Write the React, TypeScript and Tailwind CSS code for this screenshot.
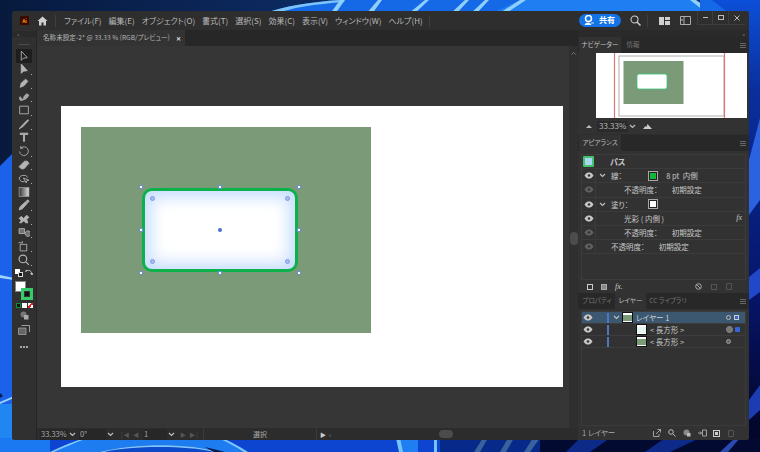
import type { ReactNode } from "react";

const MENUS = ["ファイル(F)", "編集(E)", "オブジェクト(O)", "書式(T)", "選択(S)", "効果(C)", "表示(V)", "ウィンドウ(W)", "ヘルプ(H)"];

const G = "fill-[#b4b4b4] stroke-[#b4b4b4]";

function Eye({ dim }: { dim?: boolean }) {
  return (
    <svg width="10" height="7" viewBox="0 0 10 7" className={dim ? "opacity-30" : ""}>
      <path d="M0.5 3.5C2 1 3.5 0.5 5 0.5S8 1 9.5 3.5C8 6 6.500 6.500 5 6.500S2 6 0.500 3.500Z" fill="#c9c9c9" />
      <circle cx="5" cy="3.500" r="1.300" fill="#333" />
    </svg>
  );
}

function Chevron() {
  return (
    <svg width="7" height="5" viewBox="0 0 7 5">
      <path d="M1 1l2.500 2.500L6 1" fill="none" stroke="#bdbdbd" strokeWidth="1.200" />
    </svg>
  );
}

function Menu3() {
  return (
    <div className="mr-[3px] flex flex-col justify-center gap-[1px]">
      <span className="h-px w-[6px] bg-[#666]" />
      <span className="h-px w-[6px] bg-[#666]" />
      <span className="h-px w-[6px] bg-[#666]" />
    </div>
  );
}

function Tool({ children, active, corner = true }: { children: ReactNode; active?: boolean; corner?: boolean }) {
  return (
    <div className={`relative flex h-[13.6px] w-[16px] items-center justify-center ${active ? "rounded-[1px] bg-[#1e1e1e]" : ""}`}>
      <svg width="12" height="12" viewBox="0 0 11 11" className={G} strokeWidth="0.8">
        {children}
      </svg>
      {corner && <span className="absolute bottom-[1px] right-[0px] h-[1px] w-[1px] bg-[#aaa]" />}
    </div>
  );
}

function AppRow({ eye, dim, children, fx }: { eye?: boolean; dim?: boolean; children: ReactNode; fx?: boolean }) {
  return (
    <div className="flex h-[14.2px] items-center border-b border-[#3b3b3b]">
      <div className="flex h-full w-[14px] items-center justify-center border-r border-[#3b3b3b]">{eye && <Eye dim={dim} />}</div>
      <div className="flex flex-1 items-center">{children}</div>
      {fx && <span className="mr-[3px] font-['Liberation_Serif',serif] text-[8px] italic text-[#c9c9c9]">fx</span>}
    </div>
  );
}

function Thumb({ green }: { green?: boolean }) {
  return (
    <div className="flex h-[11px] w-[11px] items-center justify-center border border-[#111] bg-white">
      <div className={`h-[6px] w-[9px] ${green ? "bg-[#7a9a78]" : "bg-[#e6f6ef]"}`} />
    </div>
  );
}

function LayerRow({ active, children, right }: { active?: boolean; children: ReactNode; right: ReactNode }) {
  return (
    <div className={`flex h-[12px] items-center border-b border-[#3d3d3d] ${active ? "bg-[#3c5870]" : ""}`}>
      <div className="flex w-[12px] justify-center"><Eye /></div>
      <div className="ml-[13px] h-[10px] w-[2px] bg-[#4f74c8]" />
      <div className="flex flex-1 items-center">{children}</div>
      <div className="flex w-[22px] items-center gap-[2px] pl-[3px]">{right}</div>
    </div>
  );
}

function Handle({ className }: { className: string }) {
  return <span className={`absolute h-[4px] w-[4px] border border-[#6f8ed0] bg-white ${className}`} />;
}

function Corner({ className }: { className: string }) {
  return <span className={`absolute h-[5px] w-[5px] rounded-full border border-[#7f9be6] bg-[#a9bdf0] ${className}`} />;
}

export default function App() {
  return (
    <div className="relative h-[452px] w-[760px] overflow-hidden bg-[#0a2a78] font-['Noto_Sans_CJK_JP',sans-serif] text-[8.500px] text-[#c8c8c8] [font-feature-settings:'palt']">
      {/* wallpaper */}
      <svg className="absolute inset-0" width="760" height="452" viewBox="0 0 760 452">
        <defs>
          <linearGradient id="top" x1="0" y1="0" x2="1" y2="0">
            <stop offset="0" stopColor="#071a3e" />
            <stop offset="0.45" stopColor="#0d2c66" />
            <stop offset="1" stopColor="#0c2f78" />
          </linearGradient>
          <linearGradient id="rgt" x1="0" y1="0" x2="0" y2="1">
            <stop offset="0" stopColor="#0c4fd8" />
            <stop offset="0.2" stopColor="#0a2f9c" />
            <stop offset="0.65" stopColor="#06156a" />
            <stop offset="1" stopColor="#020420" />
          </linearGradient>
        </defs>
        <rect width="760" height="452" fill="url(#top)" />
        {/* top band */}
        <path d="M262 14C285 6 310 2 340 0H690L712 14Z" fill="#1568e6" />
        <path d="M520 0H690L712 14H490Z" fill="#1f7ff2" />
        <path d="M262 14C285 6 310 2 340 0L345 2C315 4 290 8 275 14Z" fill="#7cc4f8" />
        <path d="M330 14L340 0H345L335 14ZM366 14L378 0H382L372 14ZM408 14L425 0H429L414 14ZM450 14L465 0H469L456 14ZM470 14L485 0H489L476 14ZM498 14L520 0H526L505 14ZM690 0H696L716 14H708Z" fill="#8fd0fa" />
        {/* right side */}
        <rect x="700" y="0" width="60" height="452" fill="url(#rgt)" />
        <path d="M700 0H712L730 14H700Z" fill="#1568e6" />
        <path d="M749 160L760 118V200L749 215Z" fill="#2a62e0" />
        <path d="M749 277L760 268V292L749 300Z" fill="#2148c8" />
        <path d="M749 400L760 385V410L749 420Z" fill="#1c3cb4" />
        {/* left side */}
        <path d="M0 166L14 152V452H0Z" fill="#1a62ea" />
        <path d="M0 275L14 278V280L0 278Z" fill="#9ed4fa" />
        <path d="M0 402L14 396V398L0 404Z" fill="#9ed4fa" />
        <path d="M0 393L3 396L0 398Z" fill="#051a50" />
        <path d="M0 404H14V452H0Z" fill="#1f86f2" />
        {/* bottom band */}
        <rect x="0" y="438" width="760" height="14" fill="#0d45d0" />
        <rect x="0" y="438" width="50" height="14" fill="#1a78f0" />
        <path d="M50 452C65 445 75 441 85 438H220C232 442 240 447 248 452Z" fill="#1d7cf0" />
        <path d="M100 452C130 444 185 442 218 452Z" fill="#0b49c8" />
        <path d="M50 452C65 445 75 441 85 438H88C77 442 68 446 54 452ZM100 452C130 444 185 442 218 452H214C185 445 130 446 104 452ZM222 438C232 442 240 447 248 452H244C236 447 228 442 218 438Z" fill="#82c6f8" />
        <path d="M205 447L225 452H214Z" fill="#041848" />
        <path d="M396 438H418V452H400Z" fill="#1f7ff2" />
        <path d="M396 438H400L403 452H399ZM434 438H437V452H434ZM483 438H488L480 452H474ZM508 438H514L506 452H500ZM533 438H540L530 452H524Z" fill="#77c3f8" />
        <path d="M440 452V438H700L760 438V452Z" fill="#04124e" opacity="0.55" />
        <path d="M540 438H760V452H540Z" fill="#020a32" />
        <path d="M566 452L580 438H610L590 452ZM645 452L665 438H700L670 452Z" fill="#0d2a88" />
        <path d="M720 452L735 438H740L728 452Z" fill="#2a4ab0" />
      </svg>

      {/* window */}
      <div className="absolute left-[12px] top-[11px] flex h-[429px] w-[737px] flex-col overflow-hidden rounded-[3px] bg-[#323232]">
        {/* menu bar */}
        <div className="flex h-[19px] shrink-0 items-center bg-[#2e2e2e]">
          <div className="ml-[8px] flex h-[9px] w-[9px] items-center justify-center rounded-[1px] bg-[#3a0a00] text-[5px] font-bold text-[#ff9a00]">Ai</div>
          <svg width="11" height="10" viewBox="0 0 11 10" className="ml-[8px]">
            <path d="M5.500 0.500L0.500 5H2V9.500H4.500V6.500H6.500V9.500H9V5H10.500Z" fill="#cfcfcf" />
          </svg>
          <div className="ml-[7px] h-[12px] w-px bg-[#3f3f3f]" />
          <div className="ml-[8px] flex gap-[7px] whitespace-nowrap text-[8px] text-[#b9b9b9]">
            {MENUS.map((m) => (
              <span key={m}>{m}</span>
            ))}
          </div>
          <div className="ml-[6px] h-[12px] w-px bg-[#3f3f3f]" />
          <div className="flex-1" />
          <div className="mb-[1px] flex h-[13px] w-[42px] items-center gap-[5px] rounded-full bg-[#1473e6] pl-[5px] text-[8px] font-bold text-white">
            <svg width="10" height="10" viewBox="0 0 10 10">
              <circle cx="4.500" cy="3.500" r="3" fill="none" stroke="#fff" strokeWidth="1.500" />
              <path d="M1 9.500C2 7.500 6 7.500 7 9.500Z M7 8h3" fill="#fff" stroke="#fff" strokeWidth="0.800" />
            </svg>
            <span>共有</span>
          </div>
          <svg width="11" height="11" viewBox="0 0 11 11" className="ml-[9px]">
            <circle cx="4.500" cy="4.500" r="3.500" fill="none" stroke="#ccc" strokeWidth="1.100" />
            <path d="M7 7l3.500 3.500" stroke="#ccc" strokeWidth="1.500" />
          </svg>
          <div className="ml-[6px] h-[12px] w-px bg-[#3f3f3f]" />
          <svg width="11" height="8" viewBox="0 0 11 8" className="ml-[11px]">
            <path d="M0 0H5V8H0ZM6 0H11V3H6ZM6 4H11V8H6Z" fill="#d0d0d0" />
          </svg>
          <svg width="11" height="9" viewBox="0 0 11 9" className="ml-[10px]">
            <path d="M0.500 0.500H10.500V8.500H0.500Z M4 0.500V8.500" fill="none" stroke="#bbb" strokeWidth="0.900" />
            <path d="M1 3H3.500V5H1Z" fill="#777" />
          </svg>
          <div className="ml-[6px] mt-[-5px] flex h-[14px] items-center text-[#bbb]">
            <div className="flex h-full w-[16px] items-center justify-center border-b border-r border-l border-[#3d3d3d]"><span className="h-px w-[5px] bg-[#bbb]" /></div>
            <div className="flex h-full w-[16px] items-center justify-center border-b border-r border-[#3d3d3d]"><span className="h-[5px] w-[6px] border border-[#bbb]" /></div>
            <div className="flex h-full w-[16px] items-center justify-center border-b border-[#3d3d3d]">
              <svg width="6" height="6" viewBox="0 0 6 6"><path d="M0.500 0.500L5.500 5.500M5.500 0.500L0.500 5.500" stroke="#bbb" /></svg>
            </div>
          </div>
          <div className="w-[4px]" />
        </div>

        <div className="flex min-h-0 flex-1">
          {/* tools */}
          <div className="flex w-[25px] shrink-0 flex-col items-center border-r border-[#262626] bg-[#303030] pt-[1px]">
            <div className="mb-[7px] h-[6px] w-full bg-[#2a2a2a] pl-[5px] text-[5px] leading-[6px] text-[#888]">»</div>
            <div className="mb-[4px] h-px w-[12px] bg-[#4a4a4a]" />
            <Tool active corner={false}><path d="M3 1L3 9.500L5 7.500L8.500 7Z" fill="none" /></Tool>
            <Tool><path d="M3 1L3 9.500L5 7.500L8.500 7Z" /></Tool>
            <Tool><path d="M2 9.500L3 5.500L7 2L9 4L5.500 8Z" /></Tool>
            <Tool><path d="M5 8L5.500 5L8 2.500L10 4L7.500 7ZM5 8C2 10 0.500 7 2 5" fillOpacity="0.900" /></Tool>
            <Tool><path d="M1.500 2H9.500V9H1.500Z" fill="none" /></Tool>
            <Tool><path d="M1 10L4 6.500L5 7.500ZM4.500 6L9 1.500L9.800 2.200L5.300 7Z" /></Tool>
            <Tool corner={false}><path d="M2 2H9V3.200H6V9.500H5V3.200H2Z" /></Tool>
            <Tool><path d="M2.500 3A4 4 0 1 1 1.500 6M2.500 1V3H4.500" fill="none" /></Tool>
            <Tool><path d="M1 7L6 2H8.500L10 4L5.500 9H3Z" /></Tool>
            <Tool><path d="M6 9A4 3 0 1 1 9 5M5 5.500L10 7.500L8 8L7.500 10Z" fill="none" /></Tool>
            <Tool corner={false}>
              <defs><linearGradient id="grad"><stop offset="0" stopColor="#333" /><stop offset="1" stopColor="#ddd" /></linearGradient></defs>
              <rect x="1" y="1.500" width="9" height="8" fill="url(#grad)" stroke="#aaa" strokeWidth="0.600" />
            </Tool>
            <Tool><path d="M1 10L2 7L7 2.500L8.500 4L4 9ZM7.500 2L9 0.800L10.200 2L9 3.500Z" /></Tool>
            <Tool><path d="M1 5L3 3L5 5L8 2L10 4L8 6L9 9H7L5.500 7L3 9H1.500L3 6.500Z" /></Tool>
            <Tool><path d="M1 1.500H6V6H1ZM6.500 6A2.500 2.500 0 1 1 6.500 6.100" fillOpacity="0.500" /></Tool>
            <Tool><path d="M2 4H8V10H2ZM4 1V3M0.500 2.500H3.500" fill="none" /></Tool>
            <Tool><path d="M4.500 1A3.500 3.500 0 1 0 4.500 8A3.500 3.500 0 1 0 4.500 1M7 7L10 10" fill="none" strokeWidth="1.100" /></Tool>
            <div className="flex h-[13px] w-[20px] items-center justify-between px-[1px]">
              <span className="relative h-[8px] w-[8px]"><span className="absolute left-0 top-0 h-[5px] w-[5px] bg-white" /><span className="absolute bottom-0 right-0 h-[5px] w-[5px] border border-[#ddd] bg-[#111]" /></span>
              <svg width="8" height="8" viewBox="0 0 8 8"><path d="M1 2.500C3 0.500 6 1 7 5M5.500 4L7 6L8 4M0 2.500L2 1" fill="none" stroke="#ccc" /></svg>
            </div>
            {/* fill & stroke */}
            <div className="relative mt-[1px] h-[19px] w-[18px]">
              <span className="absolute left-0 top-0 h-[11px] w-[11px] border border-[#888] bg-white" />
              <span className="absolute bottom-0 right-0 flex h-[12px] w-[12px] items-center justify-center border-[3px] border-[#38c96a] bg-[#333]"><span className="h-[4px] w-[4px] bg-[#111]" /></span>
            </div>
            <div className="mt-[3px] flex gap-[1px]">
              <span className="flex h-[5px] w-[5px] items-center justify-center border border-[#0b8f3a] bg-[#111]" />
              <span className="h-[5px] w-[5px] bg-white" />
              <span className="h-[5px] w-[5px] bg-[linear-gradient(135deg,#fff_35%,#e02020_35%,#e02020_60%,#fff_60%)]" />
            </div>
            <svg width="9" height="9" viewBox="0 0 9 9" className="mt-[3px]"><circle cx="3.500" cy="3.500" r="3" fill="#777" /><rect x="4" y="4" width="4.500" height="4.500" fill="#aaa" /></svg>
            <svg width="12" height="10" viewBox="0 0 12 10" className="mt-[5px]"><path d="M0.500 3H8V9.500H0.500Z" fill="#666" stroke="#aaa" strokeWidth="0.700" /><path d="M3.500 0.500H11.500V7" fill="none" stroke="#aaa" strokeWidth="0.900" /></svg>
            <div className="mt-[11px] flex gap-[1px]"><span className="h-[2px] w-[2px] rounded-full bg-[#ccc]" /><span className="h-[2px] w-[2px] rounded-full bg-[#ccc]" /><span className="h-[2px] w-[2px] rounded-full bg-[#ccc]" /></div>
          </div>

          {/* document */}
          <div className="flex w-[541px] shrink-0 flex-col">
            <div className="flex h-[16px] shrink-0 bg-[#272727]">
              <div className="flex w-[148px] items-center justify-between bg-[#333] pl-[6px] pr-[4px] text-[6.6px] text-[#b5b5b5]">
                <span className="whitespace-nowrap">名称未設定-2* @ 33.33 % (RGB/プレビュー)</span>
                <span className="text-[6px] font-bold text-[#ddd]">✕</span>
              </div>
            </div>
            <div className="flex min-h-0 flex-1">
              <div className="min-w-0 flex-1 bg-[#363636] pl-[24px] pt-[60px]">
                {/* artboard */}
                <div className="h-[281px] w-[502px] bg-white pl-[20px] pt-[21px]">
                  <div className="h-[206px] w-[290px] bg-[#7a9a78] pl-[61px] pt-[61px]">
                    <div className="relative h-[84px] w-[156px]">
                      <div className="h-full w-full rounded-[10px] border-[3px] border-[#0cb14b] bg-white shadow-[inset_0_0_16px_6px_#c5dcff]" />
                      <Handle className="left-[-3px] top-[-3px]" />
                      <Handle className="left-[76px] top-[-3px]" />
                      <Handle className="right-[-3px] top-[-3px]" />
                      <Handle className="left-[-3px] top-[40px]" />
                      <Handle className="right-[-3px] top-[40px]" />
                      <Handle className="bottom-[-3px] left-[-3px]" />
                      <Handle className="bottom-[-3px] left-[76px]" />
                      <Handle className="bottom-[-3px] right-[-3px]" />
                      <Corner className="left-[8px] top-[8px]" />
                      <Corner className="right-[8px] top-[8px]" />
                      <Corner className="bottom-[8px] left-[8px]" />
                      <Corner className="bottom-[8px] right-[8px]" />
                      <span className="absolute left-[76px] top-[40px] h-[4px] w-[4px] rounded-full bg-[#4a6fd0]" />
                    </div>
                  </div>
                </div>
              </div>
              {/* vertical scrollbar */}
              <div className="relative flex w-[9px] shrink-0 justify-center bg-[#2f2f2f] pt-[6px]">
                <svg width="5" height="3" viewBox="0 0 5 3"><path d="M0.500 2.500L2.500 0.500L4.500 2.500" fill="none" stroke="#777" /></svg>
                <span className="absolute left-[0.500px] top-[186px] h-[13px] w-[8px] rounded-[4px] bg-[#4c4c4c]" />
              </div>
            </div>
            {/* status bar */}
            <div className="flex h-[12px] shrink-0 items-center bg-[#2c2c2c] text-[7.500px] text-[#a8a8a8]">
              <div className="ml-[3px] flex h-[11px] w-[28px] items-center bg-[#272727] pl-[1px]">33.33%</div>
              <div className="flex w-[9px] justify-center"><Chevron /></div>
              <div className="ml-[2px] flex h-[11px] w-[27px] items-center bg-[#272727] pl-[1px]">0°</div>
              <div className="flex w-[9px] justify-center"><Chevron /></div>
              <div className="ml-[6px] w-[22px] text-[6px] tracking-[1px] text-[#555]">|◀ ◀</div>
              <div className="flex h-[11px] w-[24px] items-center bg-[#272727] pl-[1px]">1</div>
              <div className="flex w-[9px] justify-center"><Chevron /></div>
              <div className="ml-[4px] w-[20px] text-[6px] tracking-[1px] text-[#555]">▶ ▶|</div>
              <div className="ml-[3px] flex h-[12px] w-[114px] items-center justify-center border-l border-r border-[#3a3a3a] text-[7px]">選択</div>
              <span className="ml-[3px] text-[6px] text-[#ccc]">▶</span>
              <span className="ml-[3px] text-[7px] text-[#888]">‹</span>
              <div className="ml-[108px] h-[8px] w-[14px] rounded-[4px] bg-[#4c4c4c]" />
            </div>
          </div>

          {/* right panels */}
          <div className="flex min-w-0 flex-1 flex-col bg-[#2d2d2d] text-[7.500px]">
            <div className="flex h-[7px] justify-end bg-[#2a2a2a] pr-[4px] text-[5px] leading-[7px] text-[#888]">»</div>
            {/* navigator */}
            <div className="flex h-[16px] items-stretch whitespace-nowrap bg-[#282828] text-[6.500px]">
              <div className="ml-[1px] flex w-[42px] items-center justify-center bg-[#323232] text-[#c5c5c5]">ナビゲーター</div>
              <div className="flex w-[24px] items-center justify-center text-[#777]">情報</div>
              <div className="flex-1" />
              <Menu3 />
            </div>
            <div className="flex h-[65px] justify-end bg-[#323232] pr-[2px]">
              <svg width="151" height="65" viewBox="0 0 151 65">
                <rect width="151" height="65" fill="#fff" />
                <rect x="23" y="3" width="105" height="60" fill="#fff" stroke="#b0b0b0" strokeWidth="1" />
                <rect x="27.500" y="8" width="60" height="43" fill="#7a9a78" />
                <rect x="41" y="21" width="30" height="15" rx="2" fill="#fff" stroke="#3ec47c" strokeWidth="0.800" />
                <path d="M18.500 0V65M128.500 0V65" stroke="#d97a7a" strokeWidth="1.200" />
              </svg>
            </div>
            <div className="flex h-[16px] items-center bg-[#323232] text-[#b5b5b5]">
              <svg width="6" height="3" viewBox="0 0 6 3" className="ml-[8px]"><path d="M0 3L3 0L6 3Z" fill="#bbb" /></svg>
              <div className="ml-[5px] flex h-[11px] w-[31px] items-center bg-[#2a2a2a] pl-[2px] text-[8px]">33.33%</div>
              <div className="flex h-[11px] w-[8px] justify-center pt-[3px]"><Chevron /></div>
              <svg width="9" height="5" viewBox="0 0 9 5" className="ml-[7px]"><path d="M0 5L2.500 2L3.500 3L4.500 0L9 5Z" fill="#ccc" /></svg>
            </div>

            {/* appearance */}
            <div className="mt-[1px] flex h-[16px] items-stretch whitespace-nowrap bg-[#282828] text-[6.500px]">
              <div className="ml-[1px] flex w-[42px] items-center justify-center bg-[#323232] text-[#bdbdbd]">アピアランス</div>
              <div className="flex-1" />
              <Menu3 />
            </div>
            <div className="flex h-[142px] flex-col bg-[#323232] px-[3px] pt-[3px]">
              <div className="flex-1 border-x border-t border-[#3b3b3b]">
                <div className="flex h-[14.2px] items-center border-b border-[#3b3b3b] font-bold">
                  <span className="ml-[1px] flex h-[11px] w-[11px] items-center justify-center rounded-[1px] border-[2px] border-[#43c46c] bg-[#a9d6f5]" />
                  <span className="ml-[16px] text-[8px]">パス</span>
                </div>
                <AppRow eye>
                  <div className="ml-[3px]"><Chevron /></div>
                  <span className="ml-[5px]">線：</span>
                  <span className="ml-[26px] flex h-[10px] w-[10px] items-center justify-center border border-[#aaa] bg-[#222]"><span className="h-[6px] w-[6px] bg-[#11b93a]" /></span>
                  <span className="ml-[8px]">8 pt&nbsp;&nbsp;内側</span>
                </AppRow>
                <AppRow eye dim><span className="ml-[28px]">不透明度：</span><span className="ml-[14px]">初期設定</span></AppRow>
                <AppRow eye>
                  <div className="ml-[3px]"><Chevron /></div>
                  <span className="ml-[5px]">塗り：</span>
                  <span className="ml-[19px] flex h-[10px] w-[10px] items-center justify-center border border-[#aaa] bg-[#222]"><span className="h-[6px] w-[6px] bg-white" /></span>
                </AppRow>
                <AppRow eye fx><span className="ml-[28px]">光彩 ( 内側 )</span></AppRow>
                <AppRow eye dim><span className="ml-[28px]">不透明度：</span><span className="ml-[14px]">初期設定</span></AppRow>
                <AppRow eye dim><span className="ml-[15px]">不透明度：</span><span className="ml-[14px]">初期設定</span></AppRow>
              </div>
              <div className="flex h-[14px] items-center border-t border-[#3b3b3b] px-[3px]">
                <span className="ml-[3px] h-[6px] w-[6px] border border-[#ccc]" />
                <span className="ml-[8px] h-[6px] w-[6px] border border-[#aaa] bg-[#888]" />
                <span className="ml-[8px] font-['Liberation_Serif',serif] text-[8px] italic text-[#ccc]">fx.</span>
                <div className="flex-1" />
                <svg width="7" height="7" viewBox="0 0 7 7"><circle cx="3.500" cy="3.500" r="2.800" fill="none" stroke="#aaa" /><path d="M1.500 1.500L5.500 5.500" stroke="#aaa" /></svg>
                <span className="ml-[9px] h-[6px] w-[6px] border border-[#555]" />
                <span className="ml-[9px] mr-[11px] h-[7px] w-[6px] rounded-[1px] border border-[#555]" />
              </div>
            </div>

            {/* layers */}
            <div className="flex h-[16px] items-stretch whitespace-nowrap bg-[#282828] text-[6.500px]">
              <div className="ml-[1px] flex w-[36px] items-center justify-center text-[#777]">プロパティ</div>
              <div className="flex w-[31px] items-center justify-center bg-[#323232] text-[#c5c5c5]">レイヤー</div>
              <div className="flex w-[44px] items-center justify-center text-[#777]">CC ライブラリ</div>
              <div className="flex-1" />
              <Menu3 />
            </div>
            <div className="flex min-h-0 flex-1 flex-col bg-[#323232] px-[3px] pt-[2px]">
              <div className="flex-1 border-x border-t border-[#3b3b3b]">
                <LayerRow
                  active
                  right={<><span className="h-[5px] w-[5px] rounded-full border border-[#bbb]" /><span className="ml-[1px] h-[5px] w-[5px] border border-[#ccc] bg-[#3366dd]" /></>}
                >
                  <div className="ml-[4px]"><Chevron /></div>
                  <div className="ml-[2px]"><Thumb green /></div>
                  <span className="ml-[3px] text-[#d5d5d5]">レイヤー 1</span>
                </LayerRow>
                <LayerRow right={<><span className="h-[7px] w-[7px] rounded-full border border-[#888] bg-[#777]" /><span className="h-[5px] w-[5px] rounded-[1px] bg-[#3366dd]" /></>}>
                  <div className="ml-[27px]"><Thumb /></div>
                  <span className="ml-[3px]">&lt; 長方形 &gt;</span>
                </LayerRow>
                <LayerRow right={<span className="h-[5px] w-[5px] rounded-full border border-[#999] bg-[#666]" />}>
                  <div className="ml-[27px]"><Thumb green /></div>
                  <span className="ml-[3px]">&lt; 長方形 &gt;</span>
                </LayerRow>
              </div>
              <div className="flex h-[15px] items-center border-t border-[#3b3b3b] pl-[1px] text-[#a8a8a8]">
                <span>1 レイヤー</span>
                <div className="flex-1" />
                <svg width="8" height="8" viewBox="0 0 8 8"><path d="M0.500 2V7.500H6V5M3 5L7.500 0.500M4.500 0.500H7.500V3.500" fill="none" stroke="#bbb" strokeWidth="0.800" /></svg>
                <svg width="8" height="8" viewBox="0 0 8 8" className="ml-[7px]"><circle cx="3" cy="3" r="2.300" fill="none" stroke="#bbb" /><path d="M5 5L7.500 7.500" stroke="#bbb" /></svg>
                <svg width="8" height="8" viewBox="0 0 8 8" className="ml-[7px]"><circle cx="3.500" cy="3.500" r="3" fill="#888" /><rect x="4" y="4" width="3.500" height="3.500" fill="#bbb" /></svg>
                <svg width="9" height="8" viewBox="0 0 9 8" className="ml-[7px]"><path d="M4.500 1H8.500V7H4.500ZM0 4H3.500M2 2.500L3.500 4L2 5.500" fill="none" stroke="#bbb" strokeWidth="0.800" /></svg>
                <span className="ml-[6px] flex h-[7px] w-[7px] items-center justify-center border border-[#ccc]"><span className="h-[3px] w-[3px] bg-[#ccc]" /></span>
                <span className="ml-[8px] mr-[12px] h-[7px] w-[6px] rounded-[1px] border border-[#555]" />
              </div>
            </div>
          </div>
        </div>
      </div>
    </div>
  );
}
